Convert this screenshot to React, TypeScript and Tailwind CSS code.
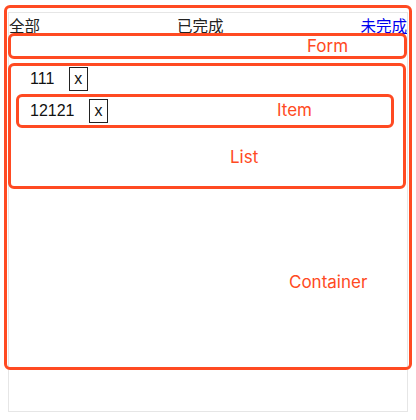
import React from "react";

const items = ["111", "12121"];

export default function App() {
  return (
    <div className="relative w-[416px] h-[420px] bg-white pt-[12px] pl-[8px] [font-family:'Liberation_Sans','Noto_Sans_CJK_SC',sans-serif] text-[16px] text-[#111]">
      <div className="w-[400px] h-[400px] border border-[#e6e6e6]">
        <div className="flex justify-between h-[22px] pt-[1px] leading-[22px] [font-family:'Noto_Sans_CJK_SC',sans-serif] text-[15.5px] text-[#222]">
          <span>全部</span>
          <span>已完成</span>
          <a href="#" className="text-[#0000ee] underline">未完成</a>
        </div>
        <form className="h-[26px]" />
        <ul className="pt-[6px] pl-[21px]">
          {items.map((t) => (
            <li key={t} className="flex items-start h-[32px]">
              <span className="mr-[14.5px] leading-[24px]">{t}</span>
              <button className="w-[19px] h-[24px] border border-[#222] leading-[20px] text-[16px] text-center">x</button>
            </li>
          ))}
        </ul>
      </div>

      {/* annotation overlays */}
      <div className="absolute left-[4px] top-[5px] w-[408px] h-[365px] border-[3px] border-[#ff4a22] rounded-[6px] pointer-events-none" />
      <div className="absolute left-[8px] top-[33px] w-[399px] h-[26px] border-[3px] border-[#ff4a22] rounded-[6px] pointer-events-none" />
      <div className="absolute left-[8px] top-[63px] w-[398px] h-[126px] border-[3px] border-[#ff4a22] rounded-[6px] pointer-events-none" />
      <div className="absolute left-[16px] top-[94px] w-[378px] h-[34px] border-[3px] border-[#ff4a22] rounded-[6px] pointer-events-none" />

      <span className="absolute left-[307px] top-[36px] text-[17px] leading-[20px] text-[#ff4a22] [font-family:Inter,sans-serif]">Form</span>
      <span className="absolute left-[277px] top-[100px] text-[17px] leading-[20px] text-[#ff4a22] [font-family:Inter,sans-serif]">Item</span>
      <span className="absolute left-[230px] top-[147px] text-[17px] leading-[20px] text-[#ff4a22] [font-family:Inter,sans-serif]">List</span>
      <span className="absolute left-[289px] top-[272px] text-[17px] leading-[20px] text-[#ff4a22] [font-family:Inter,sans-serif]">Container</span>
    </div>
  );
}
